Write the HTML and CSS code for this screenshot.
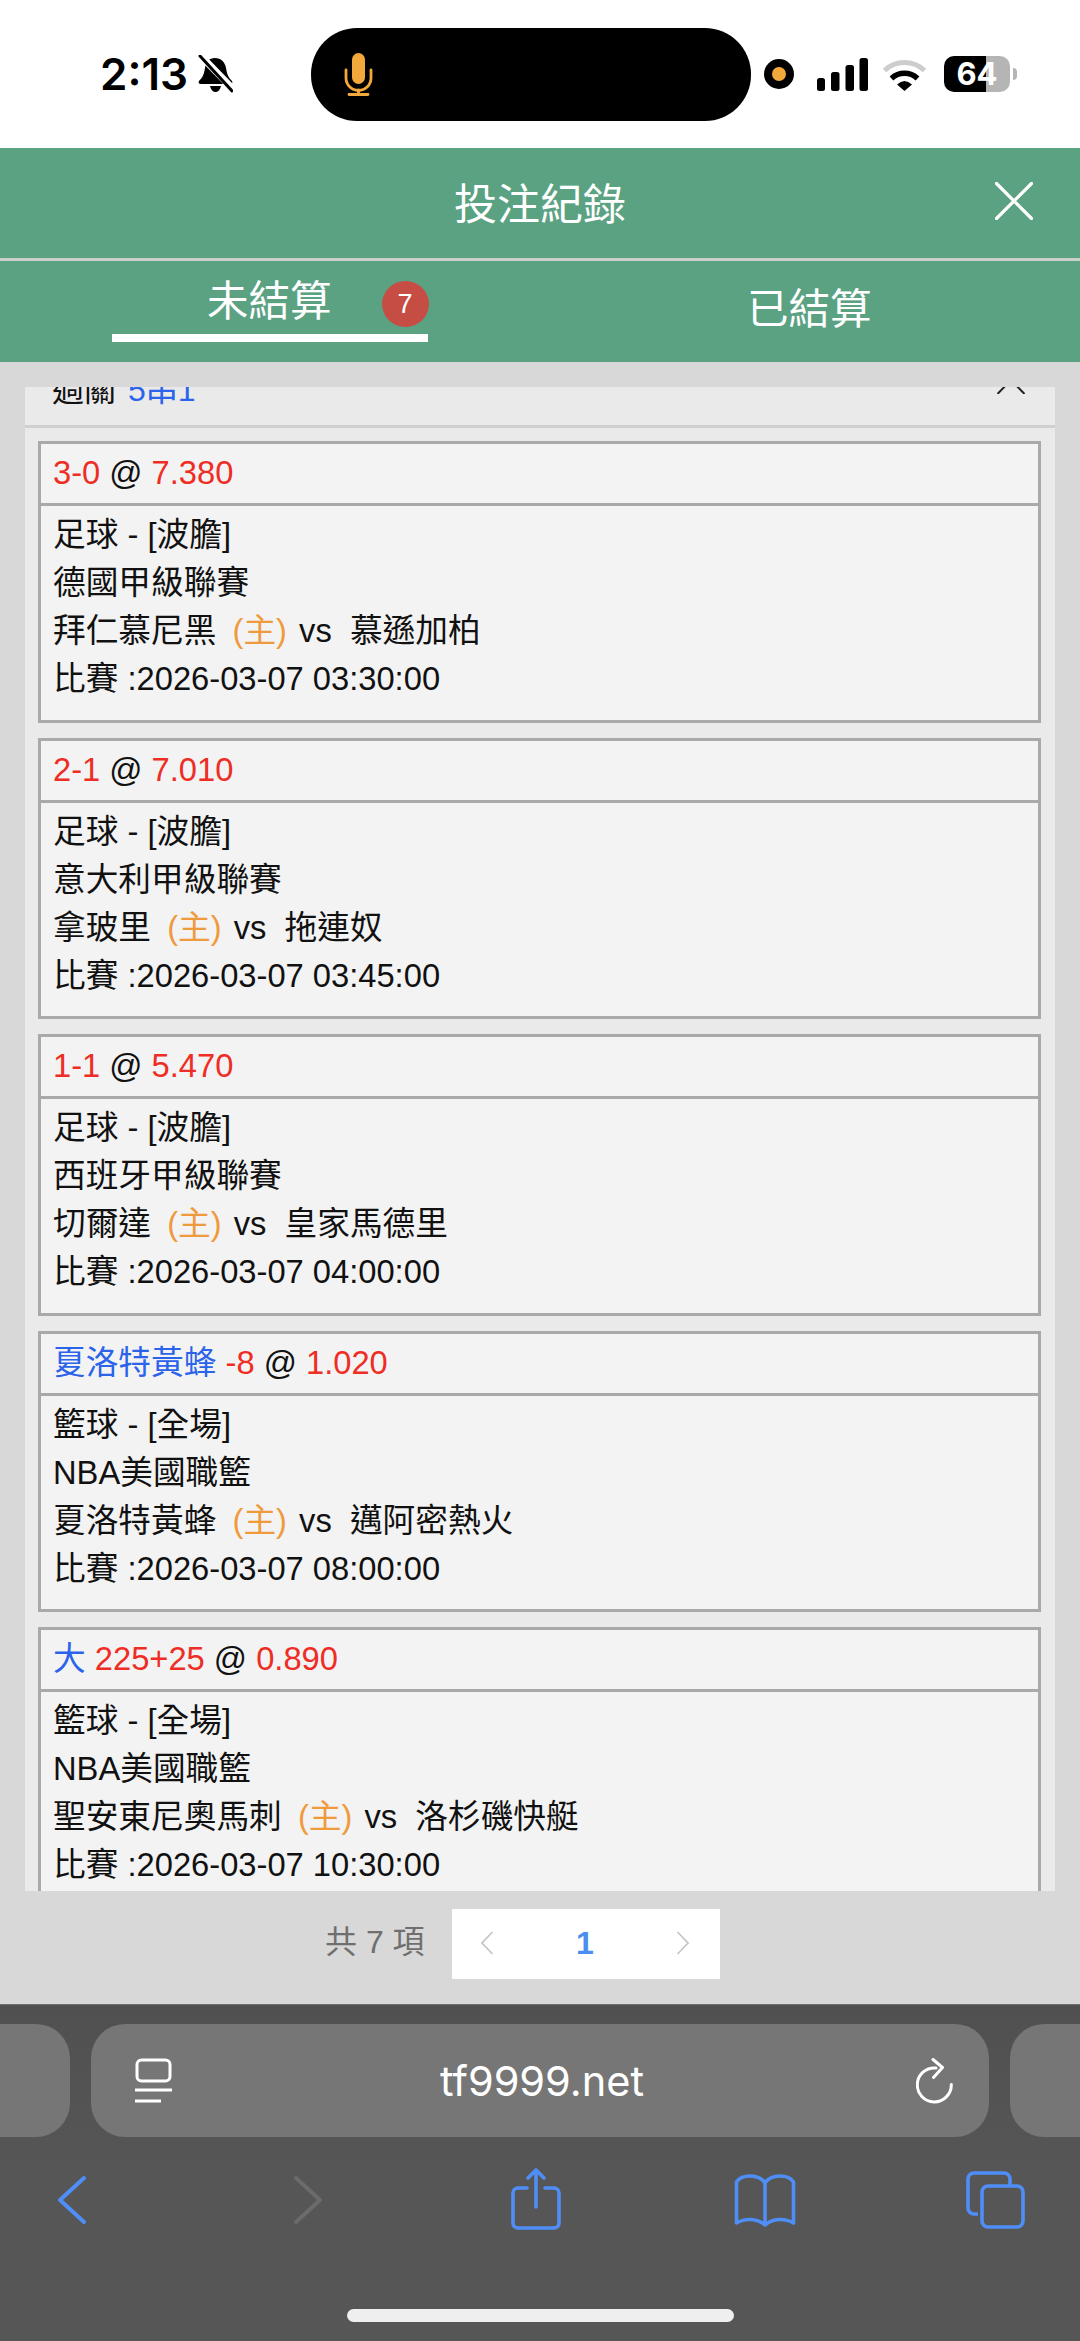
FILE: index.html
```html
<!DOCTYPE html>
<html lang="zh-Hant">
<head>
<meta charset="utf-8">
<title>投注紀錄</title>
<link rel="stylesheet" href="styles.css">
</head>
<body>
<div class="app">
  <div class="status">
    <span class="time">2:13</span>
    <svg class="bell" viewBox="0 0 35 38"><path d="M17 3c-6 0-9 4-10 10-1 6-2 9-6 13-1 2 0 3 2 3h29c2 0 3-1 2-3-4-4-5-7-6-13C27 7 23 3 17 3z" fill="#000"/><path d="M12 31h11c-1 4-3 6-5.500 6S13 35 12 31z" fill="#000"/><path d="M0 -2L36 35" stroke="#fff" stroke-width="7"/><path d="M2 1L34 36" stroke="#000" stroke-width="3" stroke-linecap="round"/></svg>
    <div class="island">
      <svg class="mic" viewBox="0 0 29 43"><rect x="8" y="0" width="13" height="31" rx="6.500" fill="#f3a83b"/><path d="M2 17v8a12.500 12.500 0 0 0 25 0v-8" fill="none" stroke="#f3a83b" stroke-width="2.800" stroke-linecap="round"/><path d="M14.500 37v5M5 41.500h19" fill="none" stroke="#f3a83b" stroke-width="2.800" stroke-linecap="round"/></svg>
    </div>
    <span class="dot"></span>
    <svg class="signal" viewBox="0 0 51 33"><rect x="0" y="20" width="8" height="13" rx="2.500"/><rect x="14" y="14" width="8.500" height="19" rx="2.500"/><rect x="28.500" y="7" width="8.500" height="26" rx="2.500"/><rect x="42.500" y="0" width="8.500" height="33" rx="2.500"/></svg>
    <svg class="wifi" viewBox="0 0 45 34"><path d="M2.500 13.500A29 29 0 0 1 42.500 13.500" fill="none" stroke="#cdcdcd" stroke-width="5"/><path d="M9.500 21.500A19 19 0 0 1 35.500 21.500" fill="none" stroke="#000" stroke-width="5.500"/><path d="M15 27.500Q22.500 20.500 30 27.500L22.500 34Z" fill="#000"/></svg>
    <div class="battery"><span>64</span></div>
    <span class="nub"></span>
  </div>

  <header class="title-bar">
    <h1 class="title">投注紀錄</h1>
    <svg class="close" viewBox="0 0 38 38"><path d="M1.500 1.500L36.500 36.500M36.500 1.500L1.500 36.500" stroke="#fff" stroke-width="3.200" stroke-linecap="round"/></svg>
  </header>

  <nav class="tabs">
    <div class="tab tab-active">未結算<span class="badge">7</span></div>
    <div class="tab tab-idle">已結算</div>
  </nav>

  <main class="content">
    <div class="panel">
      <div class="panel-inner">
        <div class="panel-head">
          <span>過關 <span class="blue panel-count">5串1</span></span>
          <svg class="caret" viewBox="0 0 28 14"><path d="M0.500 14L14 0L27.500 14" fill="none" stroke="#222" stroke-width="2"/></svg>
        </div>
        <div class="cards">
          <section class="card">
            <div class="card-head"><span class="red">3-0</span> @ <span class="red">7.380</span></div>
            <div class="card-body">
              <div>足球 - [波膽]</div>
              <div>德國甲級聯賽</div>
              <div>拜仁慕尼黑 <span class="orange">(主)</span> vs&nbsp; 慕遜加柏</div>
              <div>比賽 :2026-03-07 03:30:00</div>
            </div>
          </section>
          <section class="card">
            <div class="card-head"><span class="red">2-1</span> @ <span class="red">7.010</span></div>
            <div class="card-body">
              <div>足球 - [波膽]</div>
              <div>意大利甲級聯賽</div>
              <div>拿玻里 <span class="orange">(主)</span> vs&nbsp; 拖連奴</div>
              <div>比賽 :2026-03-07 03:45:00</div>
            </div>
          </section>
          <section class="card">
            <div class="card-head"><span class="red">1-1</span> @ <span class="red">5.470</span></div>
            <div class="card-body">
              <div>足球 - [波膽]</div>
              <div>西班牙甲級聯賽</div>
              <div>切爾達 <span class="orange">(主)</span> vs&nbsp; 皇家馬德里</div>
              <div>比賽 :2026-03-07 04:00:00</div>
            </div>
          </section>
          <section class="card">
            <div class="card-head"><span class="blue">夏洛特黃蜂</span> <span class="red">-8</span> @ <span class="red">1.020</span></div>
            <div class="card-body">
              <div>籃球 - [全場]</div>
              <div>NBA美國職籃</div>
              <div>夏洛特黃蜂 <span class="orange">(主)</span> vs&nbsp; 邁阿密熱火</div>
              <div>比賽 :2026-03-07 08:00:00</div>
            </div>
          </section>
          <section class="card">
            <div class="card-head"><span class="blue">大</span> <span class="red">225+25</span> @ <span class="red">0.890</span></div>
            <div class="card-body">
              <div>籃球 - [全場]</div>
              <div>NBA美國職籃</div>
              <div>聖安東尼奧馬刺 <span class="orange">(主)</span> vs&nbsp; 洛杉磯快艇</div>
              <div>比賽 :2026-03-07 10:30:00</div>
            </div>
          </section>
        </div>
      </div>
    </div>
    <div class="pager">
      <span class="total">共 7 項</span>
      <div class="pages">
        <svg class="pchev" viewBox="0 0 14 24"><path d="M12.500 1L2 12L12.500 23" fill="none" stroke="#c4c6cc" stroke-width="1.800"/></svg>
        <span class="page-num">1</span>
        <svg class="pchev" viewBox="0 0 14 24"><path d="M1.500 1L12 12L1.500 23" fill="none" stroke="#c4c6cc" stroke-width="1.800"/></svg>
      </div>
    </div>
  </main>

  <footer class="browser">
    <div class="url-row">
      <span class="url-side url-left"></span>
      <div class="url-bar">
        <svg class="reader" viewBox="0 0 37 45"><rect x="2" y="2" width="33" height="21" rx="4.500" fill="none" stroke="#fff" stroke-width="3"/><path d="M0 32h37M0 43h26" stroke="#fff" stroke-width="3.200"/></svg>
        <span class="url">tf9999.net</span>
        <svg class="reload" viewBox="0 0 37 46"><path d="M35.300 26.500A17 17 0 1 1 20 10" fill="none" stroke="#fff" stroke-width="3" stroke-linecap="round"/><path d="M17 1.500L26.500 9.500L17.500 19.500" fill="none" stroke="#fff" stroke-width="3" stroke-linecap="round" stroke-linejoin="round"/></svg>
      </div>
      <span class="url-side url-right"></span>
    </div>
    <div class="toolbar">
      <svg class="tool" viewBox="0 0 100 60"><path d="M62 9L38 31L62 53" fill="none" stroke="#4f8ef7" stroke-width="4" stroke-linecap="round" stroke-linejoin="round"/></svg>
      <svg class="tool" viewBox="0 0 100 60"><path d="M43 9L67 31L43 53" fill="none" stroke="#6b6b6b" stroke-width="4" stroke-linecap="round" stroke-linejoin="round"/></svg>
      <svg class="tool" viewBox="0 0 100 60"><path d="M43 19H34a5 5 0 0 0-5 5v30a5 5 0 0 0 5 5h36a5 5 0 0 0 5-5V24a5 5 0 0 0-5-5h-9" fill="none" stroke="#4f8ef7" stroke-width="3.600" stroke-linecap="round"/><path d="M52 1V38M44 9L52 1L60 9" fill="none" stroke="#4f8ef7" stroke-width="3.600" stroke-linecap="round" stroke-linejoin="round"/></svg>
      <svg class="tool" viewBox="0 0 100 60"><path d="M50 14C46 8 40 7 35 7C29 7 24 9 21.500 13V54C30 49 42 49 50 56C58 49 70 49 78.500 54V13C76 9 71 7 65 7C60 7 54 8 50 14ZM50 14V56" fill="none" stroke="#4f8ef7" stroke-width="3.600" stroke-linejoin="round"/></svg>
      <svg class="tool" viewBox="0 0 100 60"><path d="M32 45H28a6 6 0 0 1-6-6V10a6 6 0 0 1 6-6H58a6 6 0 0 1 6 6v6" fill="none" stroke="#4f8ef7" stroke-width="3.600"/><rect x="36" y="17" width="41" height="41" rx="6" fill="none" stroke="#4f8ef7" stroke-width="3.600"/></svg>
    </div>
    <div class="home-wrap"><span class="home"></span></div>
  </footer>
</div>
</body>
</html>
```

FILE: styles.css
```css
* { box-sizing: border-box; }
html, body { margin: 0; padding: 0; }
body {
  width: 1080px;
  height: 2341px;
  overflow: hidden;
  background: #fff;
  font-family: "Liberation Sans", "Noto Sans CJK TC", sans-serif;
}
.app { display: flex; flex-direction: column; height: 2341px; }

/* status bar */
.status {
  height: 148px;
  flex: none;
  display: flex;
  align-items: center;
  padding-left: 100px;
  background: #fff;
}
.time {
  width: 88px;
  font-family: Inter, sans-serif;
  font-weight: 600;
  font-size: 44px;
  line-height: 44px;
  color: #000;
  white-space: nowrap;
}
.bell { width: 35px; height: 38px; margin-left: 10px; }
.island {
  width: 440px;
  height: 93px;
  margin-left: 78px;
  border-radius: 46px;
  background: #000;
  display: flex;
  align-items: center;
  padding-left: 33px;
}
.mic { width: 29px; height: 43px; }
.dot {
  width: 30px;
  height: 30px;
  margin-left: 13px;
  border-radius: 50%;
  background: #f3a83b;
  border: 8px solid #000;
}
.signal { width: 51px; height: 33px; margin-left: 23px; }
.wifi { width: 45px; height: 34px; margin-left: 14px; }
.battery {
  width: 66px;
  height: 36px;
  margin-left: 17px;
  border-radius: 10px;
  background: linear-gradient(90deg, #000 0 42px, #b5b5b5 42px 66px);
  display: flex;
  align-items: center;
  justify-content: center;
}
.battery span {
  font-family: Inter, sans-serif;
  font-weight: 700;
  font-size: 31px;
  line-height: 36px;
  color: #fff;
}
.nub {
  width: 4px;
  height: 12px;
  margin-left: 3px;
  border-radius: 0 6px 6px 0;
  background: #b5b5b5;
}

/* title */
.title-bar {
  height: 113px;
  flex: none;
  display: flex;
  align-items: center;
  justify-content: center;
  background: #5ba283;
  border-bottom: 3px solid #c9cfcb;
  padding-top: 3px;
  position: relative;
}
.title {
  margin: 0;
  font-weight: 400;
  font-size: 43px;
  line-height: 50px;
  color: #fff;
}
.close {
  position: absolute;
  left: 995px;
  top: 34px;
  width: 38px;
  height: 38px;
}

/* tabs */
.tabs {
  height: 101px;
  flex: none;
  display: flex;
  background: #5ba283;
  color: #fff;
  font-size: 41.5px;
  padding-left: 112px;
  white-space: nowrap;
}
.tab-active {
  width: 316px;
  height: 81px;
  border-bottom: 8px solid #fff;
  padding: 16px 0 0 95px;
  line-height: 50px;
  display: flex;
  align-items: flex-start;
}
.badge {
  flex: none;
  width: 47px;
  height: 46px;
  margin: 4px 0 0 50px;
  border-radius: 50%;
  background: #c64d43;
  font-size: 27px;
  line-height: 46px;
  text-align: center;
  color: #fff;
}
.tab-idle {
  margin-left: 319px;
  padding-top: 24px;
  line-height: 50px;
}

/* content */
.content {
  flex: 1;
  display: flex;
  flex-direction: column;
  background: #d8d8d8;
}
.panel {
  height: 1504px;
  flex: none;
  margin: 25px 25px 0;
  overflow: hidden;
  background: #eaeaea;
}
.panel-inner { margin-top: -21px; }
.panel-head {
  height: 62px;
  display: flex;
  justify-content: space-between;
  padding: 0 30px 0 27px;
  border-bottom: 3px solid #d0d0d0;
  font-size: 32px;
  line-height: 48px;
  color: #111;
}
.panel-count { margin-left: 3px; }
.caret { width: 28px; height: 14px; margin-top: 14px; }
.cards {
  display: flex;
  flex-direction: column;
  gap: 15px;
  padding: 13px 14px 0 13px;
}
.card {
  height: 281.5px;
  flex: none;
  background: #f3f3f3;
  border: 3px solid #a9a9a9;
  color: #111;
  font-size: 32.7px;
  line-height: 48px;
}
.card-head {
  height: 62px;
  padding: 5px 0 0 12px;
  border-bottom: 3px solid #a9a9a9;
}
.card-body { padding: 5px 0 0 12px; }
.red { color: #ee2d25; }
.blue { color: #2b63ea; }
.orange { color: #f09a3e; margin: 0 3px 0 7px; }

/* pager */
.pager {
  display: flex;
  align-items: flex-start;
  padding: 18px 0 0 325px;
}
.total {
  width: 127px;
  padding-top: 3px;
  font-size: 32px;
  line-height: 60px;
  color: #6f6f6f;
}
.pages {
  width: 268px;
  height: 70px;
  background: #fff;
  display: flex;
  justify-content: space-between;
  align-items: flex-start;
  padding: 22px 30px 0 28px;
}
.pchev { width: 14px; height: 24px; }
.page-num {
  margin-top: -4px;
  font-weight: 700;
  font-size: 32px;
  line-height: 32px;
  color: #4a8ff0;
}

/* browser chrome */
.browser {
  height: 337px;
  flex: none;
  background: linear-gradient(180deg, #505050 0, #565656 170px);
  border-top: 1px solid #6e6e6e;
  display: flex;
  flex-direction: column;
}
.url-row {
  display: flex;
  gap: 21px;
  height: 113px;
  margin-top: 19px;
  margin-left: -40px;
}
.url-side {
  width: 110px;
  flex: none;
  background: #767676;
  border-radius: 34px;
}
.url-bar {
  width: 898px;
  flex: none;
  background: #767676;
  border-radius: 34px;
  display: flex;
  align-items: center;
  justify-content: space-between;
  padding: 0 36px 0 44px;
}
.reader { width: 37px; height: 45px; }
.reload { width: 37px; height: 46px; }
.url {
  margin-right: 4px;
  font-family: Inter, sans-serif;
  font-size: 41.5px;
  line-height: 50px;
  color: #fff;
}
.toolbar {
  display: flex;
  gap: 131px;
  padding: 32px 0 0 22px;
}
.tool { width: 100px; height: 60px; flex: none; overflow: visible; }
.home-wrap { display: flex; justify-content: center; padding-top: 80px; }
.home {
  width: 387px;
  height: 13px;
  border-radius: 7px;
  background: #efefef;
}
```
